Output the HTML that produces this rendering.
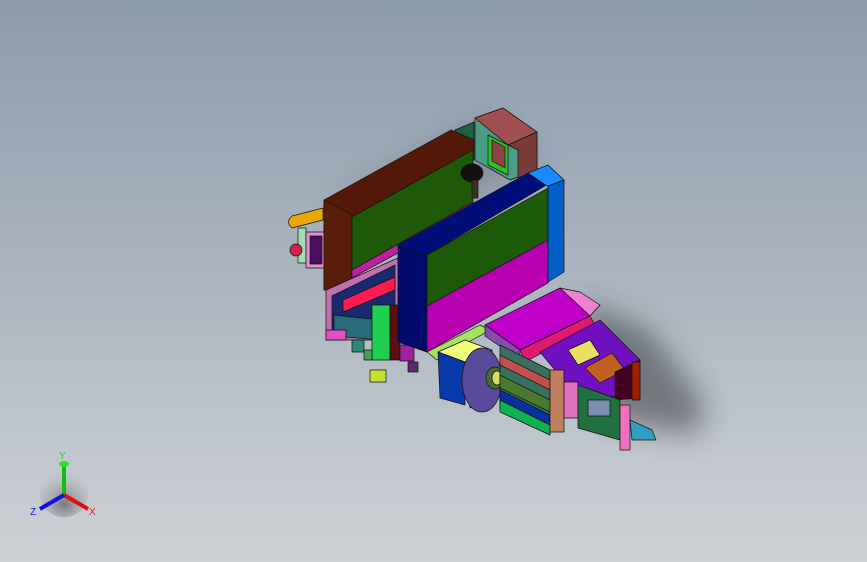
<!DOCTYPE html>
<html><head><style>
html,body{margin:0;padding:0}
body{width:867px;height:562px;overflow:hidden;background:linear-gradient(#8b9aab 0%,#a9b3be 45%,#cdd1d5 100%);}
</style></head><body>
<svg width="867" height="562" viewBox="0 0 867 562" style="position:absolute;left:0;top:0">
<defs>
<filter id="bl" x="-50%" y="-50%" width="200%" height="200%"><feGaussianBlur stdDeviation="14"/></filter>
<radialGradient id="tri" cx="0.5" cy="0.7" r="0.6"><stop offset="0" stop-color="#555"/><stop offset="1" stop-color="#b0b4b8" stop-opacity="0.3"/></radialGradient>
</defs>
<polygon points="580,300 650,330 705,405 695,435 610,420" fill="#2a2e33" opacity="0.5" filter="url(#bl)"/>
<polygon points="330,200 480,120 545,160 470,200" fill="#3a3f45" opacity="0.25" filter="url(#bl)"/>
<g stroke="#111" stroke-width="0.7" stroke-linejoin="round">
<path d="M323,208 L292,216 Q285,222 292,228 L323,220 Z" fill="#e8a800"/>
<rect x="298" y="228" width="8" height="35" fill="#9fe0b0"/>
<rect x="306" y="232" width="20" height="36" fill="#e090d0"/>
<rect x="310" y="236" width="12" height="28" fill="#4a1060"/>
<circle cx="296" cy="250" r="6" fill="#d02050"/>
<polygon points="455,130 474,122 474,160 455,170" fill="#1f5f45"/>
<polygon points="475,118 503,108 537,132 537,170 510,180 475,160" fill="#4a9c84"/>
<polygon points="475,118 503,108 537,132 508,145" fill="#a05050"/>
<polygon points="508,145 537,132 537,172 518,178 518,150" fill="#7a3a3a"/>
<polygon points="488,135 508,145 508,175 488,165" fill="#30c020"/>
<polygon points="492,140 505,147 505,168 492,161" fill="#8a4444"/>
<polygon points="324,200 451,130 474,140 474,150 352,218 352,280 324,290" fill="#531808"/>
<polygon points="324,200 352,215 352,290 324,290" fill="#5a1d0a"/>
<polygon points="352,217 473,150 473,202 352,270" fill="#1f5a0a"/>
<polygon points="352,270 473,202 473,212 352,278" fill="#c020a0"/>
<ellipse cx="472" cy="173" rx="11" ry="9" fill="#111"/>
<rect x="472" y="180" width="6" height="18" fill="#3a2f20"/>
<polygon points="326,290 398,258 398,340 326,340" fill="#c070b0"/>
<polygon points="332,296 395,265 395,335 332,335" fill="#1a2a70"/>
<polygon points="343,300 395,277 395,290 343,312" fill="#ff1a50"/>
<polygon points="334,315 380,320 380,340 334,336" fill="#2a6b7a"/>
<rect x="372" y="305" width="18" height="55" fill="#20d050"/>
<rect x="390" y="305" width="10" height="55" fill="#5a1010"/>
<rect x="326" y="330" width="20" height="10" fill="#e050c0"/>
<rect x="370" y="370" width="16" height="12" fill="#c8e030"/>
<rect x="352" y="340" width="12" height="12" fill="#2a8a7a"/>
<rect x="364" y="350" width="8" height="10" fill="#40a060"/>
<rect x="400" y="345" width="14" height="16" fill="#a020a0"/>
<rect x="408" y="362" width="10" height="10" fill="#5a2a6a"/>
<polygon points="398,245 528,173 550,183 427,255" fill="#000f78"/>
<polygon points="398,245 427,255 427,352 398,342" fill="#000a6a"/>
<polygon points="427,255 548,188 548,240 427,306" fill="#1c5a0a"/>
<polygon points="427,306 548,240 548,283 427,352" fill="#b800b0"/>
<polygon points="528,173 548,165 564,180 550,188" fill="#1a8aff"/>
<polygon points="548,186 564,180 564,272 548,282" fill="#0060c8"/>
<polygon points="427,352 480,325 490,330 437,360" fill="#a8e060"/>
<polygon points="485,325 560,288 600,305 590,316 520,350" fill="#c000c8"/>
<polygon points="560,288 580,292 600,305 590,316" fill="#ee80d0"/>
<polygon points="485,325 520,350 520,360 485,336" fill="#8a4ab0"/>
<polygon points="520,350 590,316 595,325 525,362" fill="#e01a70"/>
<polygon points="540,352 600,320 640,360 630,395 580,400" fill="#7010c0"/>
<polygon points="568,350 590,340 600,355 578,365" fill="#e8e060"/>
<polygon points="585,368 612,353 625,370 600,383" fill="#c06020"/>
<polygon points="615,372 640,360 640,398 615,400" fill="#400020"/>
<rect x="632" y="362" width="8" height="38" fill="#a02000"/>
<polygon points="438,352 465,340 492,350 465,362" fill="#f0ff80"/>
<polygon points="438,352 465,362 465,405 440,398" fill="#0a3aaa"/>
<polygon points="465,362 492,350 495,400 470,408" fill="#3a9a80"/>
<ellipse cx="482" cy="380" rx="20" ry="32" fill="#5a4a9a"/>
<ellipse cx="495" cy="378" rx="9" ry="11" fill="#4a6a30"/>
<ellipse cx="497" cy="378" rx="5" ry="7" fill="#d0e060"/>
<polygon points="500,345 550,370 550,435 500,410" fill="#3a7060"/>
<polygon points="500,355 550,380 550,390 500,365" fill="#c05050"/>
<polygon points="500,375 550,400 550,412 500,388" fill="#4a7a30"/>
<polygon points="500,390 550,415 550,425 500,400" fill="#0a30a0"/>
<polygon points="500,400 550,425 550,435 500,412" fill="#10b050"/>
<rect x="550" y="370" width="14" height="62" fill="#c08060"/>
<rect x="564" y="382" width="14" height="36" fill="#e070c0"/>
<polygon points="578,385 620,400 620,440 578,428" fill="#207040"/>
<rect x="588" y="400" width="22" height="16" fill="#7a90b0"/>
<rect x="620" y="405" width="10" height="45" fill="#f070c0"/>
<polygon points="630,420 652,430 656,440 632,440" fill="#30a0c0"/>
</g>
<g>
<ellipse cx="64" cy="495" rx="24" ry="22" fill="url(#tri)" opacity="0.7"/>
<line x1="64" y1="495" x2="64" y2="465" stroke="#10c010" stroke-width="4"/>
<ellipse cx="64" cy="464" rx="5" ry="3" fill="#30e030"/>
<line x1="64" y1="495" x2="88" y2="509" stroke="#e01010" stroke-width="4"/>
<line x1="64" y1="495" x2="40" y2="509" stroke="#1010e0" stroke-width="4"/>
<text x="59" y="459" font-family="Liberation Sans,sans-serif" font-size="10" fill="#20d020">Y</text>
<text x="89" y="515" font-family="Liberation Sans,sans-serif" font-size="10" fill="#e02020">X</text>
<text x="30" y="515" font-family="Liberation Sans,sans-serif" font-size="10" fill="#2020e0">Z</text>
</g>
</svg>
</body></html>
